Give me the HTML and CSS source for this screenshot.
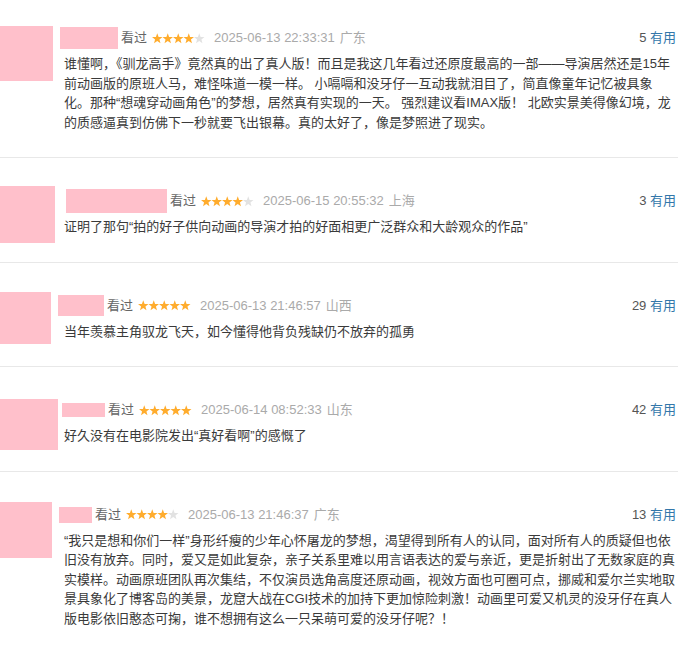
FILE: index.html
```html
<!DOCTYPE html>
<html lang="zh-CN">
<head>
<meta charset="utf-8">
<title>短评</title>
<link rel="stylesheet" href="styles.css">
</head>
<body>
<svg class="sprite" width="0" height="0" aria-hidden="true"><defs><polygon id="st" points="5.25,0.3 6.6,3.94 10.48,4.1 7.44,6.51 8.48,10.25 5.25,8.1 2.02,10.25 3.06,6.51 0.02,4.1 3.9,3.94"/></defs></svg>
<div class="list">
  <div class="review">
    <div class="avatar av1"></div>
    <div class="main">
      <div class="meta">
        <span class="name nm1"></span>
        <span class="status">看过</span>
        <svg class="stars" viewBox="0 0 53 11"><use href="#st" class="on"/><use href="#st" x="10.5" class="on"/><use href="#st" x="21" class="on"/><use href="#st" x="31.5" class="on"/><use href="#st" x="42" class="off"/></svg>
        <span class="time">2025-06-13 22:33:31</span>
        <span class="loc">广东</span>
        <span class="votes"><span class="count">5</span> <span class="useful">有用</span></span>
      </div>
      <p class="text">谁懂啊，《驯龙高手》竟然真的出了真人版！而且是我这几年看过还原度最高的一部——导演居然还是15年<br>前动画版的原班人马，难怪味道一模一样。 小嗝嗝和没牙仔一互动我就泪目了，简直像童年记忆被具象<br>化。那种“想魂穿动画角色”的梦想，居然真有实现的一天。 强烈建议看IMAX版！ 北欧实景美得像幻境，龙<br>的质感逼真到仿佛下一秒就要飞出银幕。真的太好了，像是梦照进了现实。</p>
    </div>
  </div>

  <div class="review">
    <div class="avatar av2"></div>
    <div class="main">
      <div class="meta">
        <span class="name nm2"></span>
        <span class="status">看过</span>
        <svg class="stars" viewBox="0 0 53 11"><use href="#st" class="on"/><use href="#st" x="10.5" class="on"/><use href="#st" x="21" class="on"/><use href="#st" x="31.5" class="on"/><use href="#st" x="42" class="off"/></svg>
        <span class="time">2025-06-15 20:55:32</span>
        <span class="loc">上海</span>
        <span class="votes"><span class="count">3</span> <span class="useful">有用</span></span>
      </div>
      <p class="text">证明了那句“拍的好子供向动画的导演才拍的好面相更广泛群众和大龄观众的作品”</p>
    </div>
  </div>

  <div class="review">
    <div class="avatar av3"></div>
    <div class="main">
      <div class="meta">
        <span class="name nm3"></span>
        <span class="status">看过</span>
        <svg class="stars" viewBox="0 0 53 11"><use href="#st" class="on"/><use href="#st" x="10.5" class="on"/><use href="#st" x="21" class="on"/><use href="#st" x="31.5" class="on"/><use href="#st" x="42" class="on"/></svg>
        <span class="time">2025-06-13 21:46:57</span>
        <span class="loc">山西</span>
        <span class="votes"><span class="count">29</span> <span class="useful">有用</span></span>
      </div>
      <p class="text">当年羡慕主角驭龙飞天，如今懂得他背负残缺仍不放弃的孤勇</p>
    </div>
  </div>

  <div class="review">
    <div class="avatar av4"></div>
    <div class="main">
      <div class="meta">
        <span class="name nm4"></span>
        <span class="status">看过</span>
        <svg class="stars" viewBox="0 0 53 11"><use href="#st" class="on"/><use href="#st" x="10.5" class="on"/><use href="#st" x="21" class="on"/><use href="#st" x="31.5" class="on"/><use href="#st" x="42" class="on"/></svg>
        <span class="time">2025-06-14 08:52:33</span>
        <span class="loc">山东</span>
        <span class="votes"><span class="count">42</span> <span class="useful">有用</span></span>
      </div>
      <p class="text">好久没有在电影院发出“真好看啊”的感慨了</p>
    </div>
  </div>

  <div class="review">
    <div class="avatar av5"></div>
    <div class="main">
      <div class="meta">
        <span class="name nm5"></span>
        <span class="status">看过</span>
        <svg class="stars" viewBox="0 0 53 11"><use href="#st" class="on"/><use href="#st" x="10.5" class="on"/><use href="#st" x="21" class="on"/><use href="#st" x="31.5" class="on"/><use href="#st" x="42" class="off"/></svg>
        <span class="time">2025-06-13 21:46:37</span>
        <span class="loc">广东</span>
        <span class="votes"><span class="count">13</span> <span class="useful">有用</span></span>
      </div>
      <p class="text">“我只是想和你们一样”身形纤瘦的少年心怀屠龙的梦想，渴望得到所有人的认同，面对所有人的质疑但也依<br>旧没有放弃。同时，爱又是如此复杂，亲子关系里难以用言语表达的爱与亲近，更是折射出了无数家庭的真<br>实模样。动画原班团队再次集结，不仅演员选角高度还原动画，视效方面也可圈可点，挪威和爱尔兰实地取<br>景具象化了博客岛的美景，龙窟大战在CGI技术的加持下更加惊险刺激！动画里可爱又机灵的没牙仔在真人<br>版电影依旧憨态可掬，谁不想拥有这么一只呆萌可爱的没牙仔呢？！</p>
    </div>
  </div>
</div>
</body>
</html>
```

FILE: styles.css
```css
html, body {
  margin: 0;
  background: #fff;
}

body {
  font-family: "Liberation Sans", "Noto Sans CJK SC", sans-serif;
  font-size: 13px;
  color: #3a3a3a;
}

.sprite {
  display: block;
  width: 0;
  height: 0;
}

.list {
  width: 678px;
}

.review {
  display: grid;
  grid-template-columns: 64px 1fr;
  align-items: start;
  padding: 33px 0 25px;
  border-bottom: 1px solid #e8e8e8;
}

.review:first-child {
  padding-top: 28px;
}

/* the avatar hangs beside the text and must not stretch the row */
.avatar {
  background: #ffc0cb;
  margin-bottom: -40px;
}

.av1 { width: 53px; height: 55px; margin-top: -2px; }
.av2 { width: 55px; height: 57px; margin-top: -5px; }
.av3 { width: 51px; height: 52px; margin-top: -4px; }
.av4 { width: 58px; height: 51px; margin-top: -1px; }
.av5 { width: 52px; height: 56px; margin-top: -3px; }

.main {
  min-width: 0;
}

.meta {
  display: flex;
  align-items: center;
  height: 20px;
  line-height: 20px;
  padding-right: 2px;
  white-space: nowrap;
}

.name {
  display: block;
  background: #ffc0cb;
  margin-right: 3px;
  flex: none;
}

.nm1 { width: 58px; height: 22px; margin-left: -4px; }
.nm2 { width: 101px; height: 24px; margin-left: 2px; }
.nm3 { width: 46px; height: 21px; margin-left: -6px; }
.nm4 { width: 43px; height: 14px; margin-left: -2px; }
.nm5 { width: 33px; height: 16px; margin-left: -5px; }

.status {
  color: #666;
  margin-right: 5px;
}

.stars {
  width: 53px;
  height: 11px;
  margin-right: 9px;
  flex: none;
}

.stars .on { fill: #ffac2d; }
.stars .off { fill: #e2e2e2; }

.time {
  color: #aaa;
  margin-right: 5px;
}

.loc {
  color: #aaa;
}

.votes {
  margin-left: auto;
  color: #555;
}

.useful {
  color: #37a;
}

.text {
  margin: 6px 0 0;
  line-height: 19.5px;
  white-space: nowrap;
}
```
